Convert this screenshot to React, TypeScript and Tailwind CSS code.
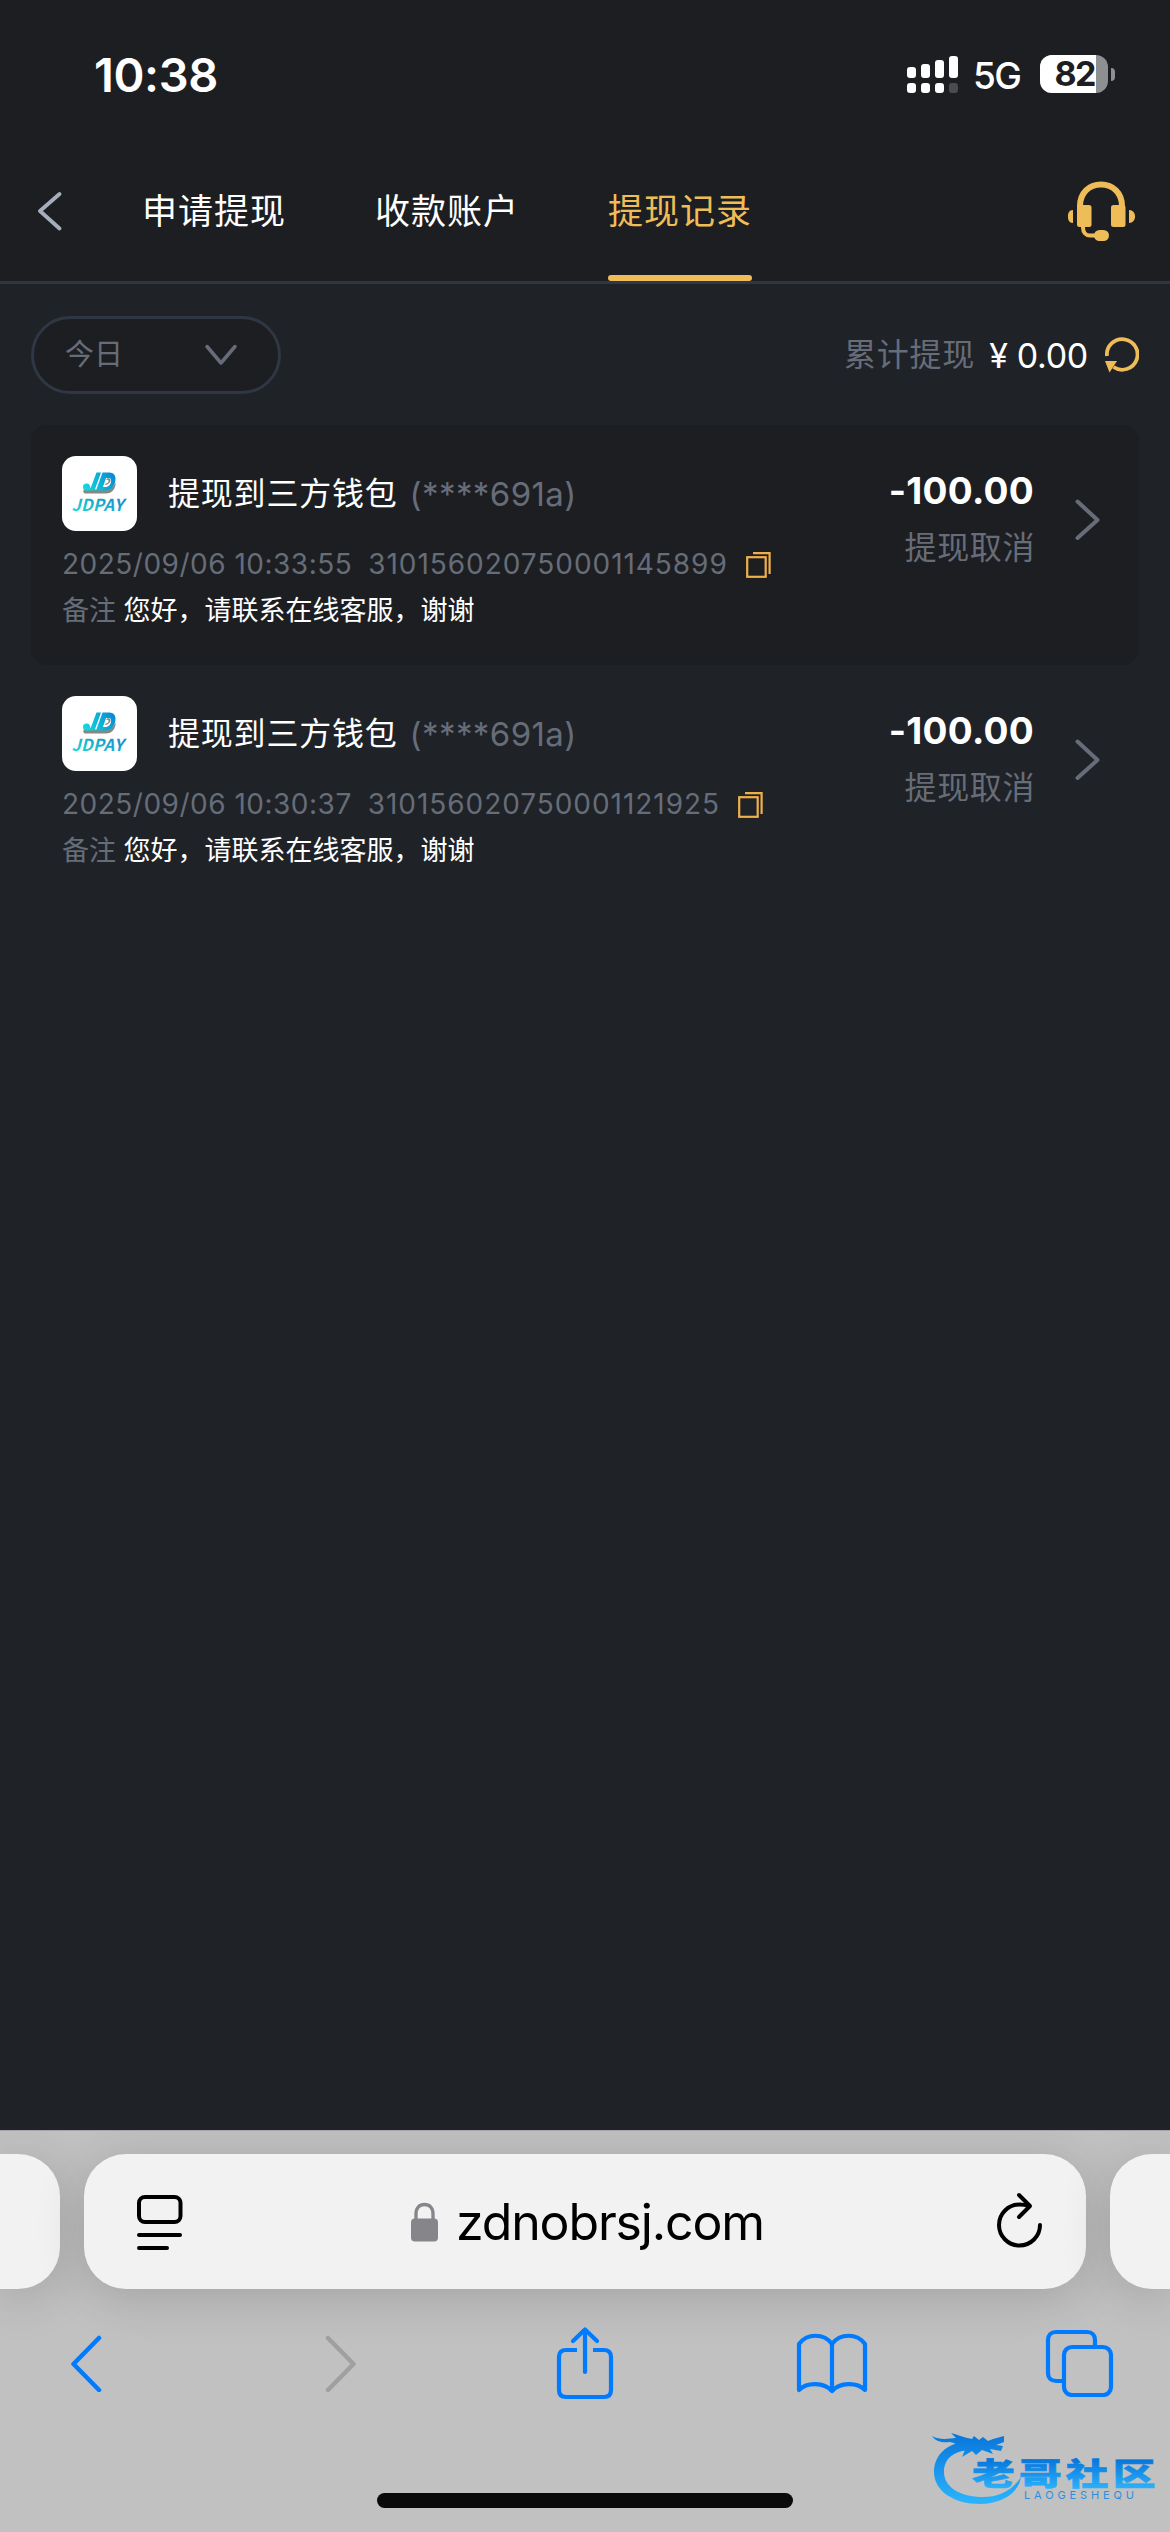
import { useState } from "react";

type TRecord = {
  id: string;
  time: string;
  amount: string;
};

const tabs = ["申请提现", "收款账户", "提现记录"];

const records: TRecord[] = [
  {
    id: "310156020750001145899",
    time: "2025/09/06 10:33:55",
    amount: "-100.00",
  },
  {
    id: "310156020750001121925",
    time: "2025/09/06 10:30:37",
    amount: "-100.00",
  },
];

const StatusBar = () => {
  return (
    <div className="flex h-[150px] items-start pl-[94px] pr-[55px] text-white">
      <span className="mt-[46px] text-[47px] font-semibold leading-[58px] tracking-[-0.4px]">
        10:38
      </span>
      <svg className="ml-auto mt-[56px]" width="52" height="38" fill="#fff">
        <rect x="0" y="11" width="9" height="11" rx="3" />
        <rect x="14" y="8" width="9" height="14" rx="3" />
        <rect x="28" y="4" width="9" height="18" rx="3" />
        <rect x="42" y="0" width="9" height="22" rx="3" />
        <rect x="0" y="27" width="9" height="10" rx="3" />
        <rect x="14" y="27" width="9" height="10" rx="3" />
        <rect x="28" y="27" width="9" height="10" rx="3" />
        <rect x="42" y="27" width="9" height="10" rx="3" fill="#4b4c4f" />
      </svg>
      <span className="ml-[14px] mt-[53px] w-[52px] text-[37px] font-medium leading-[46px] tracking-[-1.5px]">
        5G
      </span>
      <div className="ml-[15px] mt-[55px] h-[38px] w-[68px] rounded-[12px] bg-[#8e8f91]">
        <div className="flex h-full w-[56px] items-center justify-end rounded-l-[12px] bg-white pr-[1px] text-[34px] font-bold leading-[38px] tracking-[-1.5px] text-[#1d1e22]">
          82
        </div>
      </div>
      <div className="ml-[3px] mt-[68px] h-[13px] w-[4px] rounded-r-full bg-[#8e8f91]" />
    </div>
  );
};

const HeadsetIcon = () => (
  <svg width="68" height="68" viewBox="0 0 68 68" fill="#efbd58">
    <path
      d="M13 34V27C13 14 22 5.500 34 5.500S55 14 55 27V34"
      fill="none"
      stroke="#efbd58"
      strokeWidth="6"
    />
    <rect x="10" y="26" width="14.500" height="22" rx="2.500" />
    <rect x="44" y="26" width="14.500" height="22" rx="2.500" />
    <path d="M6 31v13C2 44 1 41 1 37.500s1-6.500 5-6.500zM62 31v13c4 0 6-3 6-6.500s-2-6.500-6-6.500z" />
    <path
      d="M16 47v1.500c0 5 3 8 7 8h6"
      fill="none"
      stroke="#efbd58"
      strokeWidth="4"
    />
    <rect x="27" y="51" width="15" height="11" rx="5.500" />
  </svg>
);

const RefreshIcon = () => (
  <svg width="34" height="36" viewBox="0 0 34 36">
    <path
      d="M2 19A15.300 15.300 0 1 1 8.500 30"
      fill="none"
      stroke="#efbd58"
      strokeWidth="3.800"
    />
    <path d="M0 24L12 24L4.500 35.500Z" fill="#efbd58" />
  </svg>
);

const CopyIcon = () => (
  <svg width="25" height="26" fill="none" stroke="#efb04a" strokeWidth="2.200">
    <rect x="1.200" y="5.200" width="18.500" height="19.600" />
    <path d="M7 1.200H23.600V22" />
  </svg>
);

const JdPayLogo = ({ id }: { id: string }) => (
  <svg width="75" height="75" viewBox="0 0 75 75">
    <defs>
      <linearGradient id={id} x1="0" y1="1" x2="1" y2="0">
        <stop offset="0" stopColor="#22e6d4" />
        <stop offset="1" stopColor="#1376c8" />
      </linearGradient>
      <linearGradient
        id={`${id}-mark`}
        gradientUnits="userSpaceOnUse"
        x1="21"
        y1="34"
        x2="52"
        y2="16">
        <stop offset="0" stopColor="#10dfe0" />
        <stop offset="1" stopColor="#0a86cf" />
      </linearGradient>
    </defs>
    <rect width="75" height="75" rx="14" fill="#fff" />
    {/* Grey shadow under the mark */}
    <g fill="#8b8582">
      <path d="M22 33.500L44 33.500C49 33.500 52.500 30 53.500 26V29C52.500 34 49 37.500 44 37.500H22.500C21 36.500 21 34.500 22 33.500z" />
      <path d="M44 24C45 21.500 48 22 48.500 24S46 29 43 29L43.500 27.500C46 27.500 47 25.500 46.500 24.500S45 23.500 44 24z" />
    </g>
    <g fill={`url(#${id}-mark)`}>
      <circle cx="24.500" cy="31" r="3.500" />
      <path d="M34.500 16.500H39L32.500 34.500H24.500C28 33.500 29 31 30 28.500z" />
      <path
        fillRule="evenodd"
        d="M40.500 16.500H47C53 16.500 54.500 21 53 26.500S47.500 34.500 43 34.500H34zM41 31H43.500C46.500 31 48.500 28.500 49 26S48.500 22 46.500 22H44z"
      />
    </g>
    <text
      x="9.500"
      y="55"
      fontFamily="Noto Sans CJK SC, sans-serif"
      fontSize="16.500"
      fontWeight="700"
      fontStyle="italic"
      textLength="52"
      fill={`url(#${id})`}>
      JDPAY
    </text>
  </svg>
);

const RecordCard = ({
  record,
  highlighted,
}: {
  record: TRecord;
  highlighted: boolean;
}) => {
  return (
    <div
      className={`flex h-[240px] rounded-[16px] pl-[31px] pr-[38px] pt-[31px] ${
        highlighted ? "bg-[#1d1e22]" : ""
      }`}>
      <div className="flex-1">
        <div className="flex h-[75px] items-center">
          <JdPayLogo id={`jd-${record.id}`} />
          <span className="ml-[31px] text-[32px] leading-[40px] tracking-[0.8px] text-white">
            提现到三方钱包
          </span>
          <span className="ml-[12px] text-[33px] leading-[40px] tracking-[0.4px] text-[#666d79]">
            (****691a)
          </span>
        </div>
        <div className="mt-[13px] flex h-[40px] items-center text-[28px] leading-[40px] tracking-[0.5px] text-[#666d79]">
          <span>{record.time}</span>
          <span className="ml-[16px] tracking-[0.95px]">{record.id}</span>
          <button className="ml-[18px] mt-[2px]">
            <CopyIcon />
          </button>
        </div>
        <div className="mt-[7px] text-[27px] leading-[40px] text-[#666d79]">
          备注 <span className="text-white">您好，请联系在线客服，谢谢</span>
        </div>
      </div>
      <div className="pt-[12px] text-right">
        <div className="text-[37px] font-bold leading-[46px] tracking-[0.3px] text-white">
          {record.amount}
        </div>
        <div className="-mr-[1px] mt-[14px] text-[32px] leading-[40px] tracking-[0.6px] text-[#666d79]">
          提现取消
        </div>
      </div>
      <svg
        className="ml-[40px] mt-[43px]"
        width="27"
        height="42"
        fill="none"
        stroke="#666d79"
        strokeWidth="4"
        strokeLinecap="round"
        strokeLinejoin="round">
        <path d="M3.500 2.500L23.500 21L3.500 39" />
      </svg>
    </div>
  );
};

const Watermark = () => (
  <svg className="absolute left-[928px] top-[298px]" width="232" height="84">
    <defs>
      <linearGradient
        id="mark"
        gradientUnits="userSpaceOnUse"
        x1="0"
        y1="8"
        x2="0"
        y2="76">
        <stop offset="0" stopColor="#0a78dc" />
        <stop offset="1" stopColor="#2bb6ff" />
      </linearGradient>
      <linearGradient id="markText" x1="0" y1="0.25" x2="0" y2="0.9">
        <stop offset="0" stopColor="#0878dc" />
        <stop offset="1" stopColor="#2cb4fd" />
      </linearGradient>
    </defs>
    <g fill="url(#mark)">
      <path d="M38 13C18 14 6 27 6 43C6 62 26 75 52 75C72 75 90 66 93 48C84 62 70 68 55 68C32 68 16 58 16 43C16 30 25 22 42 21z" />
      <path d="M4 7C11 11 19 10 28 9L23 4C33 7 38 9 44 10L46 7L51 11L55 8L60 12L65 10L76 7V13L68 16L75 17L73 22L62 20L65 25L54 21L48 26L44 22L34 28L37 21L30 22C32 16 27 14 22 13C15 14 8 13 4 7z" />
    </g>
    <text
      transform="translate(44 56) scale(1.380 1)"
      fontFamily="Noto Sans CJK SC, sans-serif"
      fontSize="31"
      fontWeight="900"
      letterSpacing="3"
      stroke="url(#markText)"
      strokeWidth="0.600"
      fill="url(#markText)">
      老哥社区
    </text>
    <text
      x="96"
      y="69.500"
      fontFamily="Inter, sans-serif"
      fontSize="11"
      textLength="110"
      fill="#2a8fe0">
      LAOGESHEQU
    </text>
  </svg>
);

const BrowserBar = () => {
  return (
    <div className="relative h-[402px] overflow-hidden border-t border-[#a7a2ad] bg-[#c1c1c1]">
      <div className="flex justify-between pt-[23px]">
        <div className="h-[135px] w-[60px] rounded-r-[42px] bg-[#f2f2f2] shadow-[0_8px_50px_rgba(0,0,0,0.16)]" />
        <div className="flex h-[135px] w-[1002px] items-center rounded-[42px] bg-[#f2f2f2] pl-[53px] pr-[43px] shadow-[0_8px_50px_rgba(0,0,0,0.16)]">
          <svg
            className="mt-[2px]"
            width="46"
            height="55"
            fill="none"
            stroke="#000"
            strokeWidth="4"
            strokeLinecap="round">
            <rect x="2" y="2" width="41.500" height="25" rx="6" />
            <path d="M2 40H43M2 53H30" />
          </svg>
          <svg className="ml-[228px]" width="27" height="40" viewBox="0 0 27 40">
            <path
              d="M5 19V12C5 5.500 8.500 2.500 13.500 2.500S22 5.500 22 12V19"
              fill="none"
              stroke="#85858a"
              strokeWidth="3.300"
            />
            <rect y="16.500" width="27" height="23" rx="4" fill="#85858a" />
          </svg>
          <span className="ml-[18px] text-[50px] leading-[60px] tracking-[-1.15px] text-black">
            zdnobrsj.com
          </span>
          <svg
            className="-mt-[4px] ml-auto"
            width="46"
            height="56"
            fill="none"
            stroke="#000"
            strokeWidth="4"
            strokeLinecap="round"
            strokeLinejoin="round">
            <path d="M43 33A20.500 20.500 0 1 1 22.500 12.500C26 12.500 29 13 32 14" />
            <path d="M22 3L33 14L22 25" />
          </svg>
        </div>
        <div className="h-[135px] w-[60px] rounded-l-[42px] bg-[#f2f2f2] shadow-[0_8px_50px_rgba(0,0,0,0.16)]" />
      </div>
      <div className="mt-[33px] flex h-[82px] items-center pl-[69px]">
        <svg
          width="34"
          height="58"
          fill="none"
          stroke="#007aff"
          strokeWidth="4.500"
          strokeLinecap="round"
          strokeLinejoin="round">
          <path d="M30 4L4.500 30L30 56" />
        </svg>
        <svg
          className="ml-[221px]"
          width="34"
          height="58"
          fill="none"
          stroke="#a0a0a0"
          strokeWidth="4.500"
          strokeLinecap="round"
          strokeLinejoin="round">
          <path d="M4 4L29.500 30L4 56" />
        </svg>
        <svg
          className="ml-[198px]"
          width="58"
          height="74"
          fill="none"
          stroke="#007aff"
          strokeWidth="4.200"
          strokeLinecap="round">
          <path
            d="M21 24H10C5.500 24 3 26.500 3 31V64C3 68.500 5.500 71 10 71H48C52.500 71 55 68.500 55 64V31C55 26.500 52.500 24 48 24H37"
            strokeLinecap="butt"
          />
          <path d="M29 46V4M17 15L29 3.500L41 15" strokeLinejoin="round" />
        </svg>
        <svg
          className="ml-[182px]"
          width="72"
          height="62"
          fill="none"
          stroke="#007aff"
          strokeWidth="4.200"
          strokeLinejoin="round"
          strokeLinecap="round">
          <path d="M3 12C11 1 28 1 36 12C44 1 61 1 69 12V58C61 50 44 50 36 59C28 50 11 50 3 58z" />
          <path d="M36 12V58" />
        </svg>
        <svg
          className="ml-[176px]"
          width="70"
          height="68"
          fill="none"
          stroke="#007aff"
          strokeWidth="4.200">
          <path d="M51 16V11C51 6 48 3 43 3H12C7 3 4 6 4 11V44C4 49 7 52 12 52H19" />
          <rect x="20" y="18" width="47" height="48" rx="8" />
        </svg>
      </div>
      <div className="mx-auto mt-[89px] h-[15px] w-[416px] rounded-full bg-[#0a0a0a]" />
      <Watermark />
    </div>
  );
};

const App = () => {
  const [activeTab, setActiveTab] = useState("提现记录");
  return (
    <div className="flex h-[2532px] w-[1170px] flex-col overflow-hidden bg-[#1f2227] font-['Inter','Noto_Sans_CJK_SC',sans-serif]">
      <header className="border-b-3 border-[#303643] bg-[#1d1e22]">
        <StatusBar />
        {/* Tabs */}
        <nav className="flex h-[131px] items-stretch pl-[36px] pr-[35px]">
          <svg
            className="mt-[41px]"
            width="28"
            height="40"
            fill="none"
            stroke="#a5aebd"
            strokeWidth="3.800"
            strokeLinecap="round"
            strokeLinejoin="round">
            <path d="M23.500 3L4 20L23.500 37.500" />
          </svg>
          <ul className="ml-[78px] flex gap-[89px] text-[35px] tracking-[1px]">
            {tabs.map((tab) => (
              <li
                key={tab}
                onClick={() => setActiveTab(tab)}
                className={`flex cursor-pointer flex-col justify-between pt-[37px] ${
                  activeTab === tab ? "text-[#efbd58]" : "text-white"
                }`}>
                <span className="leading-[48px]">{tab}</span>
                {activeTab === tab && (
                  <span className="h-[6px] rounded-full bg-[#efbd58]" />
                )}
              </li>
            ))}
          </ul>
          <div className="ml-auto mt-[29px]">
            <HeadsetIcon />
          </div>
        </nav>
      </header>

      <main className="flex-1 px-[31px] pt-[32px]">
        <div className="flex items-center">
          <button className="flex h-[78px] w-[250px] items-center justify-between rounded-full border-3 border-[#303744] bg-[#1d1e22] pl-[31px] pr-[40px] text-[29px] text-[#666d79]">
            <span>今日</span>
            <svg
              width="34"
              height="22"
              fill="none"
              stroke="#666d79"
              strokeWidth="3.500"
              strokeLinecap="round"
              strokeLinejoin="round">
              <path d="M3 2.500L17 19L31 2.500" />
            </svg>
          </button>
          <span className="ml-auto text-[32px] tracking-[0.8px] text-[#666d79]">
            累计提现
          </span>
          <span className="ml-[14px] text-[34px] tracking-[-0.3px] text-white">
            ¥ 0.00
          </span>
          <button className="ml-[17px]">
            <RefreshIcon />
          </button>
        </div>

        {/* Records */}
        <div className="mt-[31px]">
          {records.map((record, index) => (
            <RecordCard
              key={record.id}
              record={record}
              highlighted={index % 2 === 0}
            />
          ))}
        </div>
      </main>

      <BrowserBar />
    </div>
  );
};

export default App;
